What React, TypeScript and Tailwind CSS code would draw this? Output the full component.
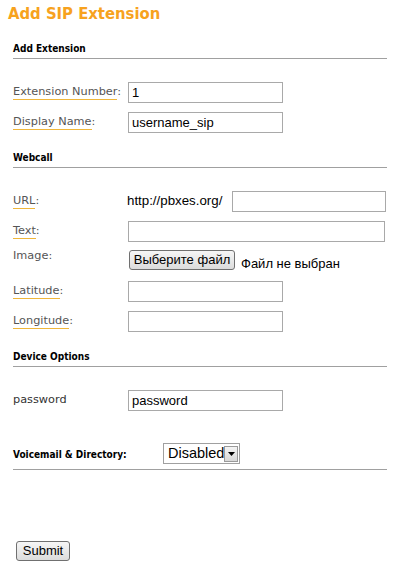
import React from "react";

const labelFont = "font-['DejaVu_Sans',sans-serif] text-[11.3px] text-[#555] leading-[14px]";
const headFont = "font-['DejaVu_Sans_Condensed','DejaVu_Sans',sans-serif] font-bold text-[10px] text-black leading-[14px]";
const inputCls =
  "h-[21px] border border-[#a9a9a9] bg-white px-[3px] font-['Liberation_Sans',Arial,sans-serif] text-[13px] text-black outline-none";

function Abbr({ children }: { children: React.ReactNode }) {
  return <span className="border-b border-[#efb63a] pb-[1px]">{children}</span>;
}

function Heading({ children, mt }: { children: React.ReactNode; mt: string }) {
  return (
    <div className={`${mt} border-b border-[#a0a0a0] pb-[2px] w-[374px]`}>
      <div className={headFont}>{children}</div>
    </div>
  );
}

function Row({ label, children }: { label: React.ReactNode; children?: React.ReactNode }) {
  return (
    <div className="flex h-[30px] items-center">
      <div className={`w-[115px] ${labelFont}`}>{label}</div>
      {children}
    </div>
  );
}

export default function App() {
  return (
    <div className="relative h-[568px] w-[402px] overflow-hidden bg-white">
      <h1 className="pl-[8px] pt-[1px] font-['DejaVu_Sans_Condensed','DejaVu_Sans',sans-serif] text-[16.5px] font-bold leading-[25px] text-[#f7a21e]">
        Add SIP Extension
      </h1>
      <div className="pl-[13px]">
        <Heading mt="mt-[16px]">Add Extension</Heading>
        <div className="mt-[18px]">
          <Row label={<><Abbr>Extension Number</Abbr>:</>}>
            <input className={`${inputCls} w-[155px]`} defaultValue="1" />
          </Row>
          <Row label={<><Abbr>Display Name</Abbr>:</>}>
            <input className={`${inputCls} w-[155px]`} defaultValue="username_sip" />
          </Row>
        </div>

        <Heading mt="mt-[14px]">Webcall</Heading>
        <div className="mt-[18px]">
          <div className="flex h-[30px] items-center">
            <div className={`w-[114px] ${labelFont}`}>
              <Abbr>URL</Abbr>:
            </div>
            <span className="w-[105px] font-['Liberation_Sans',Arial,sans-serif] text-[13.3px] text-black">http://pbxes.org/</span>
            <input className={`${inputCls} w-[154px]`} />
          </div>
          <Row label={<><Abbr>Text</Abbr>:</>}>
            <input className={`${inputCls} w-[257px]`} />
          </Row>
          <div className="flex h-[30px] items-start">
            <div className={`w-[115px] pt-[3px] ${labelFont} text-[#333]`}>Image:</div>
            <div className="mt-[4px] flex items-start">
              <button className="ml-[1px] h-[20px] w-[106px] rounded-[3px] border border-[#707070] bg-gradient-to-b from-[#f6f6f6] to-[#dcdcdc] font-['Liberation_Sans',Arial,sans-serif] text-[13px] leading-[18px] text-black">
                Выберите файл
              </button>
              <span className="ml-[6px] mt-[4px] font-['Liberation_Sans',Arial,sans-serif] text-[13px] text-black">
                Файл не выбран
              </span>
            </div>
          </div>
          <Row label={<><Abbr>Latitude</Abbr>:</>}>
            <input className={`${inputCls} w-[155px]`} />
          </Row>
          <Row label={<><Abbr>Longitude</Abbr>:</>}>
            <input className={`${inputCls} w-[155px]`} />
          </Row>
        </div>

        <Heading mt="mt-[14px]">Device Options</Heading>
        <div className="mt-[18px]">
          <Row label={<span className="text-[#333]">password</span>}>
            <input className={`${inputCls} w-[155px]`} defaultValue="password" />
          </Row>
        </div>

        <div className="mt-[28px] w-[374px] border-b border-[#a0a0a0] pb-[5px]">
          <div className="flex items-center">
            <div className={`w-[150px] ${headFont} pt-[2px]`}>Voicemail &amp; Directory:</div>
            <div className="flex h-[21px] w-[77px] items-center border border-[#a0a0a0] bg-white pl-[4px]">
              <span className="flex-1 font-['Liberation_Sans',Arial,sans-serif] text-[14.5px] leading-[17px] text-black">
                Disabled
              </span>
              <span className="mr-[1px] flex h-[16px] w-[16px] items-center justify-center border border-[#9a9a9a] bg-gradient-to-b from-[#f4f4f4] to-[#d8d8d8]">
                <svg width="7" height="4" viewBox="0 0 7 4">
                  <path d="M0 0H7L3.5 4Z" fill="#000" />
                </svg>
              </span>
            </div>
          </div>
        </div>

        <button className="mt-[71px] ml-[3px] h-[20px] w-[54px] rounded-[3px] border border-[#707070] bg-gradient-to-b from-[#f6f6f6] to-[#dcdcdc] font-['Liberation_Sans',Arial,sans-serif] text-[13px] leading-[18px] text-black">
          Submit
        </button>
      </div>
    </div>
  );
}
